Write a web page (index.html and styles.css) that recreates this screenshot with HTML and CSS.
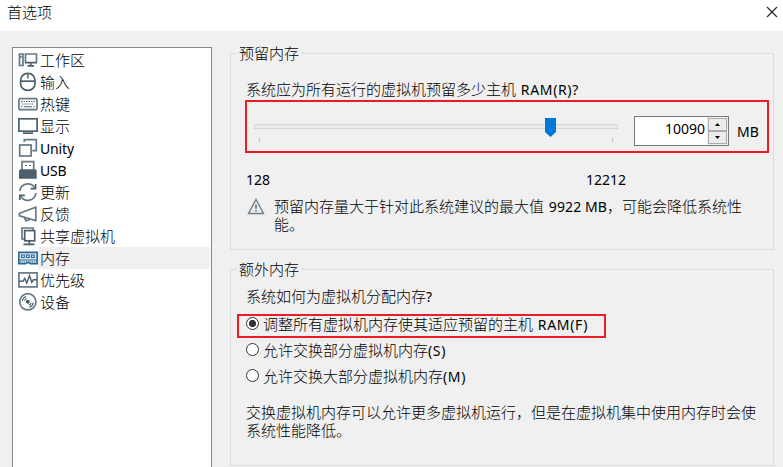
FILE: index.html
```html
<!DOCTYPE html>
<html lang="zh-CN">
<head>
<meta charset="utf-8">
<title>首选项</title>
<link rel="stylesheet" href="styles.css">
</head>
<body>
<header class="titlebar">
  <span class="title">首选项</span>
  <svg class="close" width="12" height="12" viewBox="0 0 12 12"><path d="M1 1l10 10M11 1L1 11"/></svg>
</header>
<main class="content">
  <nav class="sidebar">
    <div class="item"><svg class="icon" viewBox="0 0 20 22"><path class="light" d="M1.5 5v11.5h3.5V5zM2 8h2"/><path class="light" d="M7.5 13.5V5h11v8.5"/><path d="M7 13.7h12M12.7 14v2.5M9.5 16.8h6.5"/></svg><span>工作区</span></div>
    <div class="item"><svg class="icon" viewBox="0 0 20 22"><rect x="2.6" y="2.4" width="14.4" height="17" rx="7"/><path d="M2.5 10.2h14.6"/><path class="light" d="M9.8 2.5v5"/></svg><span>输入</span></div>
    <div class="item"><svg class="icon" viewBox="0 0 20 22"><rect class="light" x="1" y="5.7" width="18" height="11" rx="1"/><path class="thin" stroke-dasharray="1.5 1" d="M3 8.5h14M3.7 11h12.5"/><path class="thin" d="M3 13.8h1.5M6 13.8h8M15.5 13.8H17"/></svg><span>热键</span></div>
    <div class="item"><svg class="icon" viewBox="0 0 20 22"><rect x=".9" y="3.8" width="18.2" height="12.4"/><path d="M5 18.2h10"/></svg><span>显示</span></div>
    <div class="item"><svg class="icon" viewBox="0 0 20 22"><path class="light" d="M6.3 5V2.6h12v11h-4"/><rect class="light" x="1.7" y="8" width="11.4" height="11"/></svg><span class="en">Unity</span></div>
    <div class="item"><svg class="icon" viewBox="0 0 20 22"><path class="light" d="M4 11V2.7h11.7V11"/><path class="thin" d="M7 6.5h2M11 6.5h2"/><path class="solid" d="M2.5 10.3h15l1.2 1.2v8.2H1v-8.2z"/></svg><span class="en">USB</span></div>
    <div class="item"><svg class="icon" viewBox="0 0 20 22"><path class="light" d="M1.8 9.8A8.1 8.1 0 0 1 16.5 6.5M17.9 12A8.1 8.1 0 0 1 3 15.5"/><path d="M17.6 3v4.6h-5M1.8 19v-4.6h5"/></svg><span>更新</span></div>
    <div class="item"><svg class="icon" viewBox="0 0 20 22"><path class="light" d="M17.8 4.3v13.2L1.5 12.8v-2.5zM6.3 14.5l1.5 3.2 4-1"/></svg><span>反馈</span></div>
    <div class="item"><svg class="icon" viewBox="0 0 20 22"><path class="light" d="M6 14H4V3h11v2"/><rect x="6.7" y="5.6" width="10" height="10.2"/><path d="M11.3 16v3M5.5 19.4h11"/></svg><span>共享虚拟机</span></div>
    <div class="item selected"><svg class="icon memory" viewBox="0 0 20 22"><path d="M.8 5.3h18.4v11.4h-7l-1-1H8.8l-1 1h-7z"/><path class="thin" d="M3.5 8h2.8v2.5H3.5zM8.5 8h2.8v2.5H8.5zM13.5 8h2.8v2.5h-2.8zM1 13h18"/><path class="thin" stroke-dasharray="1 1" d="M2 15h16"/></svg><span>内存</span></div>
    <div class="item"><svg class="icon" viewBox="0 0 20 22"><rect class="light" x=".9" y="3.9" width="18.2" height="14"/><path class="trace" d="M1 12.2h4l1.8-2.8 2 4.6 2.7-7.5 2.3 6.8 1.6-2.5H19"/></svg><span>优先级</span></div>
    <div class="item"><svg class="icon" viewBox="0 0 20 22"><circle class="light" cx="9.8" cy="10.8" r="8.1"/><circle class="solid" cx="9.8" cy="10.8" r="2"/><path class="thin" d="M4.3 10A5.6 5.6 0 0 1 8.2 5.5M6.5 9.6A3.5 3.5 0 0 1 8.5 7.6M15.3 11.6a5.6 5.6 0 0 1-3.9 4.5M13.1 12a3.5 3.5 0 0 1-2 2"/></svg><span>设备</span></div>
  </nav>
  <div class="panels">
    <section class="group reserved">
      <h2 class="legend">预留内存</h2>
      <p class="question">系统应为所有运行的虚拟机预留多少主机 <span class="en wide ram">RAM(R)?</span></p>
      <div class="control">
        <div class="slider">
          <div class="track"></div>
          <div class="ticks"><i></i><i></i></div>
          <svg class="thumb" width="11" height="19" viewBox="0 0 11 19"><path d="M0 0h11v14l-5.5 5L0 14z"/></svg>
        </div>
        <div class="spinner">
          <span class="value en">10090</span>
          <div class="arrows">
            <div class="arrow"><svg width="5" height="3" viewBox="0 0 5 3"><path d="M2.5 0L5 3H0z"/></svg></div>
            <div class="arrow"><svg width="5" height="3" viewBox="0 0 5 3"><path d="M0 0h5L2.5 3z"/></svg></div>
          </div>
        </div>
        <span class="unit en">MB</span>
      </div>
      <div class="range en"><span>128</span><span>12212</span></div>
      <div class="warning">
        <svg width="18" height="17" viewBox="0 0 18 17"><path d="M9 1.5L16.5 15.5H1.5z"/><path class="mark" d="M9 6.5v4.3M9 12v1.6"/></svg>
        <p>预留内存量大于针对此系统建议的最大值 <span class="en number">9922 MB</span>，可能会降低系统性<br>能。</p>
      </div>
    </section>
    <section class="group extra">
      <h2 class="legend">额外内存</h2>
      <p class="question">系统如何为虚拟机分配内存<span class="en">?</span></p>
      <div class="options">
        <div class="option framed"><i class="radio checked"></i><span>调整所有虚拟机内存使其适应预留的主机 <span class="en wide ram">RAM(F)</span></span></div>
        <div class="option"><i class="radio"></i><span>允许交换部分虚拟机内存<span class="en wide">(S)</span></span></div>
        <div class="option"><i class="radio"></i><span>允许交换大部分虚拟机内存<span class="en wide">(M)</span></span></div>
      </div>
      <p class="note">交换虚拟机内存可以允许更多虚拟机运行，但是在虚拟机集中使用内存时会使<br>系统性能降低。</p>
    </section>
  </div>
</main>
</body>
</html>
```
FILE: styles.css
```css
*, *::after { box-sizing: border-box; }
body {
  margin: 0;
  height: 467px;
  overflow: hidden;
  background: #f0f0f0;
  color: #000;
  font: 300 15px/18px "Noto Sans CJK SC", sans-serif;
  white-space: nowrap;
}
p, h2 { margin: 0; font-size: 15px; font-weight: 300; }
.en { font-family: "Noto Sans", sans-serif; font-size: 14px; font-weight: 400; line-height: 1; }
.wide { letter-spacing: .65px; }
.ram { margin-left: 1.5px; }
.number { margin-left: 1.5px; letter-spacing: .1px; }
.titlebar {
  display: flex;
  justify-content: space-between;
  height: 31px;
  padding: 3px 5px 0 7px;
  background: #fff;
}
.close { margin-top: 3px; fill: none; stroke: #222; stroke-width: 1.1; }
.content { display: flex; gap: 18px; padding: 16px 9px 0 12px; }
.sidebar {
  width: 200px;
  height: 440px;
  padding: 1px;
  border: 1px solid #828790;
  background: #fff;
}
.item { display: flex; align-items: center; height: 22px; padding-left: 4px; }
.item > span { flex: 1; height: 22px; padding-left: 2px; line-height: 22px; }
.item > .en { line-height: 23px; letter-spacing: -.15px; }
.selected > span { background: #f0f0f0; }
.icon { width: 20px; height: 22px; fill: none; stroke: #4b5f6d; stroke-width: 1.7; }
.icon .light { stroke: #667986; }
.icon .thin { stroke-width: 1.1; }
.icon .trace { stroke-width: 1.4; }
.icon .solid { fill: #4b5f6d; stroke: none; }
.memory { stroke: #326992; fill: #d5e5ef; }
.panels { width: 544px; padding-top: 6px; }
.group { position: relative; border: 1px solid #dcdcdc; height: 197px; padding-left: 15px; }
.extra { margin-top: 19px; }
.legend {
  position: absolute;
  top: -10px;
  left: 6px;
  padding: 0 2px;
  background: #f0f0f0;
}
.question { padding-top: 26px; }
.control {
  display: flex;
  width: 524px;
  height: 53px;
  margin: 2px 0 0 -1px;
  padding: 14px 0 0 7px;
  border: 2px solid #ed1c24;
}
.slider { position: relative; width: 364px; padding-top: 8px; }
.track { height: 5px; border: 1px solid #d6d6d6; background: #e7eaea; }
.ticks { display: flex; justify-content: space-between; padding: 9px 5px 0; }
.ticks i { width: 1px; height: 4px; background: #c4c4c4; }
.thumb { position: absolute; top: 2px; left: 291px; fill: #0078d7; }
.spinner {
  display: flex;
  width: 95px;
  height: 30px;
  margin-left: 16px;
  border: 1px solid #7a7a7a;
  background: #fff;
}
.value { flex: 1; padding-right: 2px; line-height: 24px; text-align: right; }
.arrows {
  display: flex;
  flex-direction: column;
  width: 21px;
  padding: 1px;
  background: #f0f0f0;
}
.arrow {
  display: flex;
  flex: 1;
  align-items: center;
  justify-content: center;
  border: 1px solid #acacac;
  background: #ececec;
}
.unit { margin-left: 8px; line-height: 31px; }
.range { display: flex; padding-top: 19px; line-height: 16px; }
.range span:first-child { width: 340px; }
.warning { display: flex; padding-top: 9px; }
.warning svg { margin: 1px 0 0 1px; fill: none; stroke: #6d7d89; stroke-width: 1.4; }
.warning .mark { stroke: #5b6b78; stroke-width: 1.6; }
.warning p { margin-left: 9px; }
.extra .question { padding-top: 17px; }
.options { padding-top: 6px; }
.option { position: relative; display: flex; align-items: center; height: 26px; }
.option > span { padding-bottom: 1px; }
.framed::after {
  content: "";
  position: absolute;
  left: -9px;
  top: 3px;
  width: 369px;
  height: 24px;
  border: 2px solid #ed1c24;
}
.radio {
  width: 13px;
  height: 13px;
  margin: 0 4px 2px 0;
  border: 1px solid #333;
  border-radius: 50%;
  background: #fff;
}
.checked { background: radial-gradient(circle, #333 3.2px, #fff 3.9px); }
.note { padding-top: 14px; }
```
